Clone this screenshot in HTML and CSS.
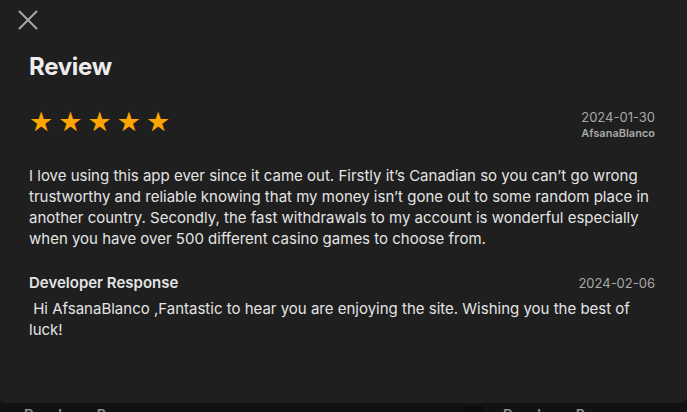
FILE: index.html
```html
<!DOCTYPE html>
<html lang="en">
<head>
  <meta charset="UTF-8">
  <meta name="viewport" content="width=device-width, initial-scale=1.0">
  <title>Review</title>
  <link rel="stylesheet" href="styles.css">
</head>
<body>
  <div class="modal">
    <button class="close-btn" aria-label="Close">
      <svg width="20" height="20" viewBox="0 0 20 20"><path d="M1 1 L19 19 M19 1 L1 19" stroke="#a8a8a8" stroke-width="2" fill="none"/></svg>
    </button>
    <h1>Review</h1>

    <div class="review-head">
      <div class="stars">
        <span>★</span><span>★</span><span>★</span><span>★</span><span>★</span>
      </div>
      <div class="meta">
        <div class="date">2024-01-30</div>
        <div class="author">AfsanaBlanco</div>
      </div>
    </div>

    <p class="review-text">I love using this app ever since it came out. Firstly it’s Canadian so you can’t go wrong trustworthy and reliable knowing that my money isn’t gone out to some random place in another country. Secondly, the fast withdrawals to my account is wonderful especially when you have over 500 different casino games to choose from.</p>

    <div class="response-head">
      <div class="response-title">Developer Response</div>
      <div class="date">2024-02-06</div>
    </div>
    <p class="response-text">&nbsp;Hi AfsanaBlanco ,Fantastic to hear you are enjoying the site. Wishing you the best of luck!</p>
  </div>

  <div class="behind">
    <div class="behind-card">Developer Response</div>
    <div class="behind-gap"></div>
    <div class="behind-card second">Developer Response</div>
  </div>
</body>
</html>
```

FILE: styles.css
```css
body {
  margin: 0;
  background: #121212;
  font-family: Inter, 'Noto Sans', sans-serif;
  color: #e6e6e6;
  height: 412px;
  overflow: hidden;
}
.modal {
  background: #1f1f1f;
  height: 403px;
  box-sizing: border-box;
  padding: 10px 32px 0 29px;
  border-radius: 0 0 6px 6px;
}
.close-btn {
  background: none;
  border: none;
  padding: 0;
  margin-left: -11px;
  width: 20px;
  height: 20px;
  display: block;
  cursor: pointer;
}
h1 {
  margin: 22px 0 0;
  font-size: 24px;
  font-weight: 700;
  color: #ececec;
  letter-spacing: -0.3px;
  line-height: 30px;
}
.review-head {
  display: flex;
  justify-content: space-between;
  align-items: flex-start;
  margin-top: 26px;
}
.stars {
  display: flex;
  gap: 5px;
  color: #ffa500;
  font-size: 27px;
  line-height: 28px;
  font-family: 'DejaVu Sans', sans-serif;
}
.meta {
  text-align: right;
  padding-top: 1px;
}
.date {
  font-size: 13px;
  color: #a8a8a8;
  line-height: 16px;
}
.author {
  font-size: 11px;
  font-weight: 600;
  color: #a8a8a8;
  line-height: 16px;
}
.review-text {
  margin: 24px 0 0;
  font-size: 15px;
  line-height: 21px;
  color: #e4e4e4;
}
.response-head {
  display: flex;
  justify-content: space-between;
  align-items: center;
  margin-top: 24px;
}
.response-title {
  font-size: 15px;
  font-weight: 600;
  color: #e4e4e4;
}
.response-text {
  margin: 6px 0 0;
  font-size: 15px;
  line-height: 21px;
  color: #e4e4e4;
}
.behind {
  display: grid;
  grid-template-columns: 464px 20px 1fr;
  padding-top: 3px;
}
.behind-card {
  padding-left: 24px;
  font-size: 14px;
  font-weight: 600;
  color: #8a8a8a;
}
.behind-card.second {
  padding-left: 19px;
}
.behind-gap {
  background: #0c0c0c;
}
```
